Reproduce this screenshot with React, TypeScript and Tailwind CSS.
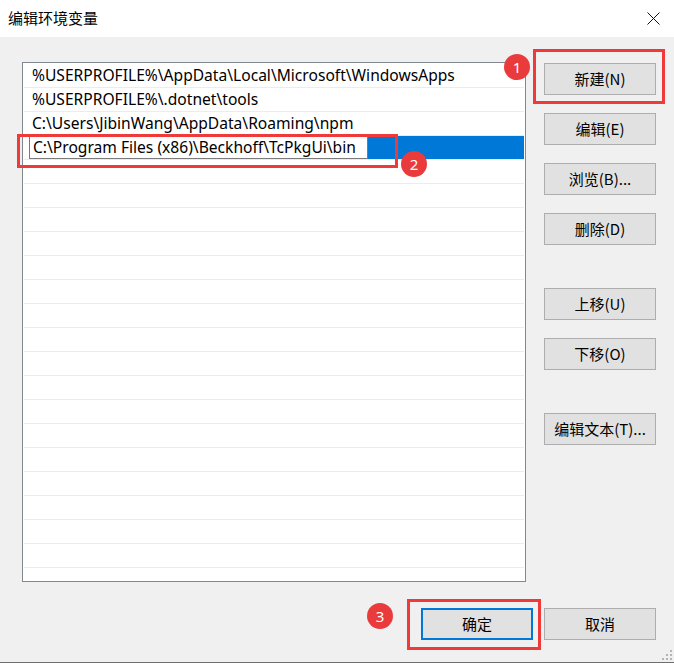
import React from "react";

const rows = [
  "%USERPROFILE%\\AppData\\Local\\Microsoft\\WindowsApps",
  "%USERPROFILE%\\.dotnet\\tools",
  "C:\\Users\\JibinWang\\AppData\\Roaming\\npm",
];

function Btn({ children, primary }: { children: React.ReactNode; primary?: boolean }) {
  return (
    <div
      className={
        "w-[112px] h-[32px] bg-[#e1e1e1] flex items-center justify-center text-[15px] text-black " +
        (primary ? "border-2 border-[#0078d7]" : "border border-[#adadad]")
      }
    >
      {children}
    </div>
  );
}

function Badge({ n, cls }: { n: string; cls: string }) {
  return (
    <div
      className={
        "absolute w-[26px] h-[26px] rounded-full bg-[#ea3b3c] text-white text-[15px] flex items-center justify-center leading-none " +
        cls
      }
    >
      {n}
    </div>
  );
}

export default function App() {
  const empty = Array.from({ length: 19 });
  return (
    <div className="relative w-[674px] h-[663px] bg-[#f0f0f0] font-['Noto_Sans','Noto_Sans_CJK_SC',sans-serif] text-black overflow-hidden flex flex-col">
      {/* title bar */}
      <div className="h-[37px] bg-white flex items-center justify-between pl-[8px] pr-[14px] shrink-0">
        <span className="text-[15px] font-['Noto_Sans_CJK_SC',sans-serif]">编辑环境变量</span>
        <svg width="13" height="13" viewBox="0 0 13 13" className="mt-[-1px]">
          <path d="M0.5 0.5 L12.5 12.5 M12.5 0.5 L0.5 12.5" stroke="#111" strokeWidth="1" />
        </svg>
      </div>

      {/* main */}
      <div className="flex pl-[22px] pr-[18px]">
        <div className="mt-[25px] w-[504px] h-[520px] border border-[#828790] bg-white pt-[1px] px-[1px] overflow-hidden">
          {rows.map((r) => (
            <div key={r} className="h-[24px] border-b border-[#ececec] flex items-center pl-[8px] text-[15.6px] whitespace-nowrap">
              {r}
            </div>
          ))}
          <div className="h-[24px] border-b border-[#ececec] flex">
            <div className="pl-[5px] bg-white h-full">
              <div className="w-[339px] h-full border border-[#7a7a7a] bg-white flex items-center pl-[3px] text-[15.6px] whitespace-nowrap">
                C:\Program Files (x86)\Beckhoff\TcPkgUi\bin
              </div>
            </div>
            <div className="flex-1 bg-[#0078d7]" />
          </div>
          {empty.map((_, i) => (
            <div key={i} className="h-[24px] border-b border-[#ececec]" />
          ))}
        </div>

        <div className="ml-auto mt-[26px] w-[112px] flex flex-col font-['Noto_Sans_CJK_SC','Noto_Sans',sans-serif]">
          <Btn>新建(N)</Btn>
          <div className="mt-[18px]"><Btn>编辑(E)</Btn></div>
          <div className="mt-[18px]"><Btn>浏览(B)...</Btn></div>
          <div className="mt-[18px]"><Btn>删除(D)</Btn></div>
          <div className="mt-[43px]"><Btn>上移(U)</Btn></div>
          <div className="mt-[18px]"><Btn>下移(O)</Btn></div>
          <div className="mt-[43px]"><Btn>编辑文本(T)...</Btn></div>
        </div>
      </div>

      {/* bottom buttons */}
      <div className="flex justify-end gap-[11px] pr-[18px] mt-[26px] font-['Noto_Sans_CJK_SC','Noto_Sans',sans-serif]">
        <Btn primary>确定</Btn>
        <Btn>取消</Btn>
      </div>

      <div className="mt-auto h-[1px] bg-[#6e6e6e]" />

      {/* resize grip */}
      <svg className="absolute right-[2px] bottom-[3px]" width="10" height="10" viewBox="0 0 10 10">
        <rect x="8" y="0" width="2" height="2" fill="#b4b4b4" />
        <rect x="4" y="4" width="2" height="2" fill="#b4b4b4" />
        <rect x="8" y="4" width="2" height="2" fill="#b4b4b4" />
        <rect x="0" y="8" width="2" height="2" fill="#b4b4b4" />
        <rect x="4" y="8" width="2" height="2" fill="#b4b4b4" />
        <rect x="8" y="8" width="2" height="2" fill="#b4b4b4" />
      </svg>

      {/* annotations */}
      <div className="absolute left-[533px] top-[49px] w-[132px] h-[55px] border-[3px] border-[#f03a3a]" />
      <div className="absolute left-[17px] top-[134px] w-[381px] h-[34px] border-[3px] border-[#f03a3a]" />
      <div className="absolute left-[407px] top-[599px] w-[134px] h-[51px] border-[3px] border-[#f03a3a]" />
      <Badge n="1" cls="left-[504px] top-[54px]" />
      <Badge n="2" cls="left-[401px] top-[151px]" />
      <Badge n="3" cls="left-[367px] top-[603px]" />
    </div>
  );
}
